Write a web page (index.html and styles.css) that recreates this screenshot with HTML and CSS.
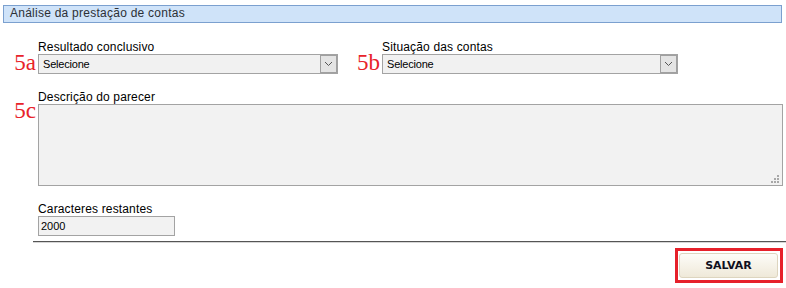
FILE: index.html
```html
<!DOCTYPE html>
<html lang="pt">
<head>
<meta charset="utf-8">
<title>Análise da prestação de contas</title>
<link rel="stylesheet" href="styles.css">
</head>
<body>
<div class="page">
  <div class="panel-header">Análise da prestação de contas</div>
  <div class="form">
    <div class="row">
      <div class="field f1">
        <label class="label">Resultado conclusivo</label>
        <span class="marker">5a</span>
        <div class="select">
          <span class="select-value">Selecione</span>
          <span class="select-arrow"><svg width="9" height="6" viewBox="0 0 9 6"><path d="M1 1 L4.5 4.5 L8 1" fill="none" stroke="#555" stroke-width="1"/></svg></span>
        </div>
      </div>
      <div class="field f2">
        <label class="label">Situação das contas</label>
        <span class="marker">5b</span>
        <div class="select">
          <span class="select-value">Selecione</span>
          <span class="select-arrow"><svg width="9" height="6" viewBox="0 0 9 6"><path d="M1 1 L4.5 4.5 L8 1" fill="none" stroke="#555" stroke-width="1"/></svg></span>
        </div>
      </div>
    </div>
    <div class="field wide">
      <label class="label">Descrição do parecer</label>
      <span class="marker marker-top">5c</span>
      <textarea class="textarea"></textarea>
    </div>
    <div class="field small">
      <label class="label">Caracteres restantes</label>
      <span class="marker"></span>
      <input class="input" type="text" value="2000">
    </div>
  </div>
  <div class="separator"></div>
  <div class="actions">
    <div class="highlight"><button class="btn" type="button">SALVAR</button></div>
  </div>
</div>
</body>
</html>
```
FILE: styles.css
```css
html, body {
  margin: 0;
  padding: 0;
  background: #ffffff;
}
body {
  font-family: "Liberation Sans", Arial, sans-serif;
  font-size: 12px;
  color: #000;
}
.page {
  width: 786px;
  padding-top: 5px;
}
.panel-header {
  box-sizing: border-box;
  height: 18px;
  margin: 0 4px 0 3px;
  border: 1px solid #7ba0cf;
  background: #cfe3f9;
  padding-left: 6px;
  font-size: 12px;
  line-height: 15px;
  letter-spacing: 0.25px;
  color: #2c3036;
}
.form {
  margin-top: 17px;
  padding-left: 12px;
}
.row {
  display: flex;
  gap: 18px;
}
.field {
  display: grid;
  grid-template-rows: 14px auto;
}
.f1 { grid-template-columns: 26px 300px; }
.f2 { grid-template-columns: 26px 296px; }
.wide { grid-template-columns: 26px 745px; margin-top: 16px; }
.small { grid-template-columns: 26px 137px; margin-top: 16px; }
.label {
  grid-column: 2;
  grid-row: 1;
  font-size: 12px;
  line-height: 14px;
  letter-spacing: 0.15px;
  white-space: nowrap;
}
.marker {
  grid-column: 1;
  grid-row: 2;
  font-family: "Liberation Serif", "Times New Roman", serif;
  font-size: 23px;
  line-height: 17px;
  color: #e8232a;
  text-align: right;
  padding-right: 2px;
  align-self: start;
  white-space: nowrap;
}
.marker-top {
  margin-top: -2px;
}
.select {
  grid-column: 2;
  grid-row: 2;
  box-sizing: border-box;
  height: 20px;
  border: 1px solid #a3a3a3;
  background: #f1f1f1;
  display: flex;
  align-items: stretch;
}
.select-value {
  flex: 1;
  padding-left: 4px;
  font-size: 11px;
  line-height: 18px;
  letter-spacing: -0.2px;
  color: #000;
}
.select-arrow {
  width: 15px;
  border: 1px solid #a0a0a0;
  background: #e4e4e4;
  display: flex;
  align-items: center;
  justify-content: center;
}
.textarea {
  grid-column: 2;
  grid-row: 2;
  box-sizing: border-box;
  width: 745px;
  height: 82px;
  margin: 0;
  border: 1px solid #a3a3a3;
  background-color: #f2f2f2;
  background-image:
    linear-gradient(#a8a8a8, #a8a8a8),
    linear-gradient(#a8a8a8, #a8a8a8),
    linear-gradient(#a8a8a8, #a8a8a8),
    linear-gradient(#a8a8a8, #a8a8a8),
    linear-gradient(#a8a8a8, #a8a8a8),
    linear-gradient(#a8a8a8, #a8a8a8);
  background-size: 2px 2px;
  background-repeat: no-repeat;
  background-position:
    right 3px bottom 8px,
    right 3px bottom 5px,
    right 6px bottom 5px,
    right 3px bottom 2px,
    right 6px bottom 2px,
    right 9px bottom 2px;
  font-family: "Liberation Sans", Arial, sans-serif;
  font-size: 11px;
  resize: none;
  outline: none;
}
.input {
  grid-column: 2;
  grid-row: 2;
  box-sizing: border-box;
  width: 137px;
  height: 20px;
  margin: 0;
  padding: 0 0 0 2px;
  border: 1px solid #a3a3a3;
  background: #f2f2f2;
  font-family: "Liberation Sans", Arial, sans-serif;
  font-size: 11px;
  color: #000;
  outline: none;
}
.separator {
  margin: 5px 0 0 33px;
  height: 1px;
  background: #555555;
  border-bottom: 1px solid #d6d6d6;
}
.actions {
  display: flex;
  justify-content: flex-end;
  margin-top: 5px;
  padding-right: 3px;
}
.highlight {
  border: 3px solid #e6202a;
  padding: 2px 2px 2px 1px;
  background: #fff;
}
.btn {
  box-sizing: border-box;
  width: 99px;
  height: 25px;
  margin: 0;
  padding: 0;
  border: 1px solid #ddd5bf;
  border-radius: 3px;
  background: linear-gradient(#fdfcf8, #efe9d9);
  font-family: "DejaVu Sans", Verdana, sans-serif;
  font-weight: bold;
  font-size: 11px;
  color: #101020;
  display: block;
}
```
